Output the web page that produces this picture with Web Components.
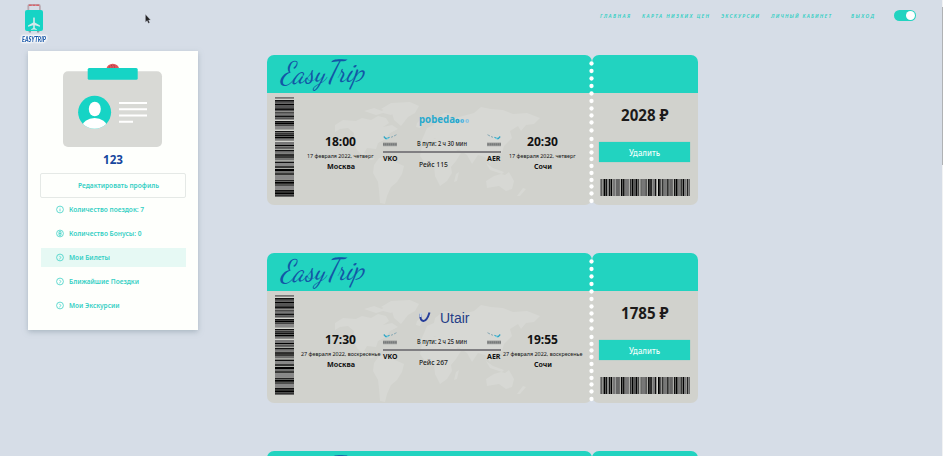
<!DOCTYPE html>
<html lang="ru">
<head>
<meta charset="utf-8">
<title>EasyTrip</title>
<style>
html,body{margin:0;height:100%;overflow:hidden;background:#d6dde7;font-family:"Noto Sans","Open Sans",sans-serif}
</style>
</head>
<body>
<trip-app></trip-app>
<script>
const TEAL='#22d3c0';
const define=(name,render)=>customElements.define(name,class extends HTMLElement{
  connectedCallback(){
    if(this.shadowRoot)return;
    this.attachShadow({mode:'open'}).innerHTML=render(k=>this.getAttribute(k));
  }
});

/* One line of text set to an exact measure: w = width, h = box height, b = baseline */
define('fit-text',a=>`<style>:host{display:block;flex:none;width:${a('w')}px;height:${a('h')}px}svg{display:block;overflow:visible}</style>
<svg width="${a('w')}" height="${a('h')}"><text x="0" y="${a('b')}" textLength="${a('w')}" lengthAdjust="${a('adjust')||'spacingAndGlyphs'}" fill="currentColor" font-size="${a('size')}" font-weight="${a('weight')||400}">${a('t')}</text></svg>`);

define('trip-logo',()=>`<style>:host{display:block;width:28px;color:#1b58a8;font-family:Lato,sans-serif;font-style:italic}svg{display:block}fit-text{margin-left:2px;filter:drop-shadow(0 0 .8px #fff) drop-shadow(0 0 .8px #fff) drop-shadow(0 0 .5px #fff)}</style>
<svg width="28" height="32" viewBox="20 2 28 32"><path d="M28.3 10V6.200q0-1.400 1.400-1.400h8.800q1.400 0 1.400 1.400V10" fill="none" stroke="#b9a9b2" stroke-width="1.800"/><path d="M28.800 5.200h10.600" stroke="#d8646b" stroke-width="1.400" stroke-dasharray="3 .7"/><path d="M28 30h3v2.500h-2zM37 30h3l-1 2.500h-2z" fill="#8b9da8"/><rect x="25" y="10" width="18" height="21" rx="2" fill="#16d4c5"/><path d="M33.200 18q.8-1.600 1.600 0v4.500l5.200 3v1.200l-5.200-1.400v2.700l2 1.300v.7l-2.800-.6-2.800.6v-.7l2-1.300v-2.700L28 26.700v-1.200l5.200-3z" fill="#d6e9ec"/></svg>
<fit-text t="EASYTRIP" w="24" h="9" b="7.500" size="7" weight="900"></fit-text>`);

define('trip-nav',()=>`<style>:host{display:flex;color:#2fcfc3;font-style:italic;padding-top:10px;align-items:flex-start}
fit-text{margin-right:12px}.g{margin-right:20px}i{width:22px;height:11px;border-radius:6px;background:${TEAL};display:flex;justify-content:flex-end}i:after{content:"";width:9px;height:9px;margin:1px;border-radius:50%;background:#fff}</style>
<fit-text t="ГЛАВНАЯ" w="30" h="11" b="7.500" size="5" weight="600" adjust="spacing"></fit-text>
<fit-text t="КАРТА НИЗКИХ ЦЕН" w="67" h="11" b="7.500" size="5" weight="600" adjust="spacing"></fit-text>
<fit-text t="ЭКСКУРСИИ" w="38" h="11" b="7.500" size="5" weight="600" adjust="spacing"></fit-text>
<fit-text class="g" t="ЛИЧНЫЙ КАБИНЕТ" w="60" h="11" b="7.500" size="5" weight="600" adjust="spacing"></fit-text>
<fit-text class="g" t="ВЫХОД" w="23" h="11" b="7.500" size="5" weight="600" adjust="spacing"></fit-text><i></i>`);

define('menu-row',a=>{
  const mark={i:'<path d="M60 8.300v.6M60 9.600v2.200"/>',b:'<path d="M59 8.200h2v3.600h-2zM59 10h2"/>',go:'<path d="M59.300 8.300 61 10l-1.700 1.700"/>'}[a('icon')];
  return `<style>:host{display:flex;height:19px;margin:0 12px 5px 13px;color:#35cfc4;${a('active')!==null?'background:#e6f9f4':''}}svg{display:block;margin-left:15px}fit-text{margin-left:4.500px}</style>
<svg width="8" height="19" viewBox="56 .5 8 19" fill="none" stroke="currentColor" stroke-width=".75"><circle cx="60" cy="10" r="3.400"/>${mark}</svg><fit-text t="${a('t')}" w="${a('w')}" h="19" b="12" size="6.900" weight="600"></fit-text>`;
});

define('profile-card',()=>`<style>:host{display:block;width:170px;height:279px;background:#fefffc;box-shadow:0 2px 5px #8798a488}
.id{display:block;margin-left:35px}.name{margin:0 auto;color:#17479e}.edit{display:flex;margin:6px 12px 2px;height:23px;border:1px solid #e5e9e6;border-radius:2px;color:#35cfc4}.edit fit-text{margin-left:36.500px}</style>
<svg class="id" width="100" height="97" viewBox="63 51 100 97"><path d="M106.500 69a6.300 5.200 0 0 1 12.600 0z" fill="#e0565b"/><path d="M109 67h7M111 65.500h4" stroke="#8f4048" stroke-width=".8" stroke-dasharray="1 1.500"/><rect x="63" y="71.300" width="99" height="75.700" rx="5" fill="#d8d9d5"/><rect x="87.700" y="68" width="50" height="11.700" rx="1.500" fill="#16d4c5"/><clipPath id="c"><circle cx="94.600" cy="112.300" r="16.500"/></clipPath><circle cx="94.600" cy="112.300" r="16.500" fill="#16d4c5"/><g clip-path="url(#c)" fill="#fff"><ellipse cx="94.800" cy="109" rx="6" ry="7.300"/><ellipse cx="94.600" cy="127" rx="12.500" ry="9"/></g><path d="M119 103h28M119 109.200h28M119 115.500h28M119 121.700h14" stroke="#fff" stroke-width="2.100"/></svg>
<fit-text class="name" t="123" w="20" h="19" b="16" size="12.700" weight="700"></fit-text>
<div class="edit"><fit-text t="Редактировать профиль" w="81" h="23" b="13.700" size="6.900" weight="600"></fit-text></div>
<menu-row icon="i" t="Количество поездок: 7" w="75"></menu-row>
<menu-row icon="b" t="Количество Бонусы: 0" w="72.500"></menu-row>
<menu-row icon="go" active t="Мои Билеты" w="41"></menu-row>
<menu-row icon="go" t="Ближайшие Поездки" w="70"></menu-row>
<menu-row icon="go" t="Мои Экскурсии" w="50.500"></menu-row>`);

/* Bars are listed as [offset, thickness, colour] in thirds of a pixel */
const BARS={
v:[[0,3,'#777'],[9,5,'#111'],[14,6,'#555'],[21,4,'#000'],[26,7,'#555'],[34,5,'#111'],[39,3,'#555'],[46,3,'#222'],[50,5,'#777'],[56,4,'#111'],[61,5,'#555'],[72,4,'#111'],[77,5,'#000'],[84,3,'#444'],[89,6,'#888'],[102,3,'#111'],[107,5,'#333'],[113,5,'#111'],[120,4,'#000'],[126,3,'#777'],[135,9,'#777'],[144,3,'#000'],[149,6,'#555'],[159,4,'#111'],[164,5,'#777'],[172,4,'#000'],[178,4,'#111'],[184,4,'#666'],[194,4,'#111'],[199,7,'#888'],[208,4,'#111'],[216,6,'#000'],[223,4,'#666'],[229,4,'#111'],[235,11,'#888'],[249,4,'#222'],[255,5,'#000'],[262,4,'#333'],[267,9,'#888'],[279,5,'#111'],[286,5,'#000'],[292,6,'#333']],
h:[[0,2,'#888'],[4,2,'#444'],[9,1,'#222'],[12,4,'#000'],[18,3,'#111'],[22,3,'#888'],[27,3,'#111'],[32,4,'#000'],[39,7,'#777'],[46,2,'#aaa'],[48,11,'#666'],[63,4,'#000'],[69,4,'#111'],[75,11,'#777'],[90,4,'#333'],[96,4,'#000'],[102,6,'#555'],[108,3,'#000'],[113,3,'#222'],[122,2,'#333'],[126,11,'#777'],[137,3,'#444'],[144,5,'#111'],[151,4,'#000'],[158,7,'#777'],[165,3,'#111'],[174,5,'#000'],[180,3,'#555'],[186,4,'#333'],[192,8,'#777'],[202,3,'#000'],[208,10,'#666'],[222,4,'#111'],[228,4,'#000'],[234,5,'#777'],[242,3,'#111'],[248,4,'#000'],[253,5,'#777'],[261,3,'#222'],[266,4,'#666']]
};
define('bar-code',a=>{
  const v=a('dir')==='v',w=v?19:90,h=v?100:17;
  /* grey underlay joins bars that stand closer than 1px */
  const under=BARS[a('dir')].map(([p,s])=>v?`<rect y="${p/3}" width="19" height="${s/3+.9}" fill="#858683"/>`:`<rect x="${p/3}" width="${Math.min(s/3+.8,90-p/3)}" height="17" fill="#858683"/>`).join('');
  return `<style>:host{display:block;width:${w}px;height:${h}px}svg{display:block}</style><svg width="${w}" height="${h}">${under}${BARS[a('dir')].map(([p,s,c])=>v?`<rect y="${p/3}" width="19" height="${s/3}" fill="${c}"/>`:`<rect x="${p/3}" width="${s/3}" height="17" fill="${c}"/>`).join('')}</svg>`;
});

define('world-map',()=>`<style>:host{display:block}svg{display:block}</style><svg width="210" height="103" viewBox="334 102 210 103" fill="#d7d8d4">
<path d="M335 125l8-5 13 1 6-3 9 2 7-4 8 2 3 5-6 4 9-2 6 4-8 4-4 6-8 4-2 6-9-1-3 5 6 3 5 3-4 1-8-4-6-6-4-9 1-8-6-5-8 1-5 3z"/>
<path d="M364 111l10-3 8 3 5-5 9-1 4 4-9 6-8-2-7 2zM381 109l10-6 19-1 9 4-4 7-7 4-7 9-7-6-2-7z"/>
<path d="M379 158l9-1 7 5 9 4-2 8-5 8-6 5-4 9-2 8-5-1-1-12-1-9-5-9 1-8z"/>
<path d="M423 142l8-4 11 2 9 3 4 8 6 2-5 8-5 6 1 6-5 8-7 5-5-10-1-11-9-2-5-7zM456 174l3-2-2 9-3 1z"/>
<path d="M424 135l3-7 7-3 1-5 9-7 8 1-2 6 9-3 15-4 7-6 10 2 12 1 10 4 14-1 13 5-6 6-8 1-5 6-3-5-8 5 2 7-8 8-2 7-9 3-3 8-5-7-7-2-6 9-5-9-9-6-4 5-7-8-7-2-5-6-6 3-2 4-7-1z"/>
<path d="M417 123l3-3 2 4-2 4-4-1zM486 163l7 5 11 4-2 2-12-4zM486 181l8-5 7-2 4 1 4-3 5 9-2 8-6 2-7-5-12 2zM523 188l3 1-6 7-3 0z"/></svg>`);

define('airline-logo',a=>a('name')==='pobeda'?`<style>:host{display:flex;color:#29a9cd;font-family:"Noto Sans",sans-serif}svg{display:block}</style>
<fit-text t="pobeda" w="36" h="17" b="11.800" size="10" weight="700"></fit-text><svg width="15" height="17"><circle cx="2.500" cy="10" r="2.200" fill="#2aa6cf"/><circle cx="7.300" cy="10" r="2" fill="#56b5dd"/><circle cx="12.300" cy="10" r="1.900" fill="#8fc4e0"/><path d="M2 10h1M7 10h1M12 10h1" stroke="#cfe2ea"/></svg>`
:`<style>:host{display:flex;color:#253d86;font-family:"Liberation Sans",sans-serif}svg{display:block}</style>
<svg width="21" height="17"><path d="M1.500 5q-.8 6 2.500 6.900 3.800.5 6.500-8.400" fill="none" stroke="#253d9a" stroke-width="2"/><path d="M.5 8V4.500l2.500-1-.7 4.500z" fill="#c3d3e6"/></svg><fit-text t="Utair" w="29.500" h="17" b="13.500" size="14" weight="400" style="-webkit-text-stroke:.5px #253d86"></fit-text>`);

define('plane-mark',a=>`<style>:host{display:block;flex:none}svg{display:block;${a('down')!==null?'transform:scaleX(-1)':''}}</style><svg width="14" height="15"><path d="M.8 2.500l1.800 2 2.400-.5 1.500-.8" fill="none" stroke="#2ca4c4" stroke-width="1.200"/><path d="M8 3.300l2-.8M11 2l2.500-1.300" stroke="#88a9b5" stroke-width="1"/><path d="M3 5.500l3-1.500" stroke="#7fd1e2"/><path d="M0 10.300h14" stroke="#a3a4a2" stroke-width="3.800"/><path d="M0 10.300h14" stroke="#777a7a" stroke-width="2.300" stroke-dasharray="1.500 .4"/></svg>`);

define('flight-stop',a=>`<style>:host{display:flex;flex-direction:column;align-items:center;width:82px;padding-top:41px;color:#111}</style>
<fit-text t="${a('time')}" w="31" h="16" b="12" size="12.500" weight="700"></fit-text>
<fit-text t="${a('date')}" w="${a('dw')}" h="11" b="7.500" size="5.600" weight="400"></fit-text>
<fit-text t="${a('city')}" w="${a('cw')}" h="12" b="7.700" size="6.800" weight="700"></fit-text>`);

/* With the "peek" attribute only the branded band of the ticket is rendered */
define('flight-ticket',a=>{
  const peek=a('peek')!==null;
  const body=peek?'':`<div class="body"><world-map></world-map><bar-code class="bars" dir="v"></bar-code>
<flight-stop time="${a('dep')}" date="${a('date')}" dw="${a('dw')}" city="Москва" cw="28"></flight-stop>
<div class="mid"><div class="logo"><slot></slot></div>
<div class="row"><plane-mark></plane-mark><fit-text t="В пути: ${a('dur')}" w="50" h="15" b="11.500" size="6.400" weight="500"></fit-text><plane-mark down></plane-mark></div>
<div class="line"></div>
<div class="codes"><fit-text t="VKO" w="14.500" h="10" b="7" size="7" weight="700"></fit-text><fit-text class="n" t="Рейс ${a('no')}" w="29" h="10" b="7.700" size="7" weight="500"></fit-text><fit-text t="AER" w="13.500" h="10" b="7" size="7" weight="700"></fit-text></div></div>
<flight-stop time="${a('arr')}" date="${a('date')}" dw="${a('dw')}" city="Сочи" cw="18"></flight-stop></div>`;
  const stub=peek?'':`<fit-text class="price" t="${a('price')} ₽" w="47.500" h="20" b="15.500" size="15.300" weight="700"></fit-text>
<button class="del"><fit-text t="Удалить" w="31" h="20" b="13.500" size="8" weight="500"></fit-text></button><bar-code dir="h"></bar-code>`;
  return `<style>
:host{display:grid;grid-template-columns:325px 106.500px;height:150px;position:relative}
.main,.stub{border-radius:7px;overflow:hidden;background:linear-gradient(${TEAL} 38px,#d1d2cd 38px);display:flex;flex-direction:column}
.brand{height:38px;padding-left:13px;color:#1256a6;font-family:"Brush Script MT","Dancing Script",Lato,cursive;font-style:italic}
.brand fit-text{transform:rotate(-2deg);-webkit-text-stroke:.35px #1256a6}
.body{display:flex;position:relative;height:112px}
world-map{position:absolute;left:67px;top:9px}
.bars{margin:4px 5.500px 0 8.500px}flight-stop,.mid{position:relative}
.mid{box-sizing:border-box;width:120px;padding:18px 1px 0 1px;color:#222}
.logo{margin-left:36px;height:23px}
.row{display:flex;justify-content:space-between;height:17px}
.line{height:2px;background:#807f82}
.codes{display:flex;color:#111;justify-content:space-between;padding-top:.5px}.codes .n{margin:5px 17px 0 0;color:#222}
.stub{align-items:center}.price{margin-top:50px;color:#1c1a19}
.del{all:unset;box-sizing:border-box;width:91px;height:20px;margin:16.500px 0 17.500px;background:${TEAL};color:#effffc;display:flex;justify-content:center;box-shadow:0 0 1px #71c9be}
.holes{position:absolute;left:322.500px;top:5.500px}
</style>
<div class="main"><div class="brand"><fit-text t="EasyTrip" w="84" h="38" b="27" size="31" weight="400"></fit-text></div>${body}</div>
<div class="stub">${stub}</div>
<svg class="holes" width="5" height="144"><g fill="#fff">${[2.5,10,17.5,25,32.5,40,47.5,54.5,61.5,69.5,78,85,91.5,98,105,112,119,125.5,132.5,140].map(y=>`<circle cx="2.500" cy="${y}" r="2.150"/>`).join('')}</g></svg>`;
});

define('trip-app',()=>`<style>
:host{display:grid;grid-template-columns:941.500px 1.500px;width:943px;height:456px;overflow:hidden;position:relative}
header{display:flex;justify-content:space-between;height:51px;box-sizing:border-box;padding:2px 25.500px 0 20px}
trip-nav{margin-top:-2px}
main{display:flex;align-items:flex-start}profile-card{margin-left:28px}
.list{display:grid;gap:48px;margin:4px 0 0 68.500px}
.scroll{background:#f1f2f3}.scroll div{margin-top:7px;height:158px;background:#b0b2b4}
.pointer{position:absolute;left:145px;top:14px}
</style>
<div><header><trip-logo></trip-logo><trip-nav></trip-nav></header>
<main><profile-card></profile-card><div class="list">
<flight-ticket dep="18:00" arr="20:30" date="17 февраля 2022, четверг" dw="66.500" dur="2 ч 30 мин" no="115" price="2028"><airline-logo name="pobeda"></airline-logo></flight-ticket>
<flight-ticket dep="17:30" arr="19:55" date="27 февраля 2022, воскресенье" dw="79.500" dur="2 ч 25 мин" no="267" price="1785"><airline-logo name="utair"></airline-logo></flight-ticket>
<flight-ticket peek></flight-ticket>
</div></main></div>
<div class="scroll"><div></div></div>
<svg class="pointer" width="6" height="10"><path d="M.5.5v7.500l1.700-1.500 1.200 2.700 1.200-.5-1.100-2.600h2z" fill="#222" stroke="#aab" stroke-width=".3"/></svg>`);
</script>
</body>
</html>
